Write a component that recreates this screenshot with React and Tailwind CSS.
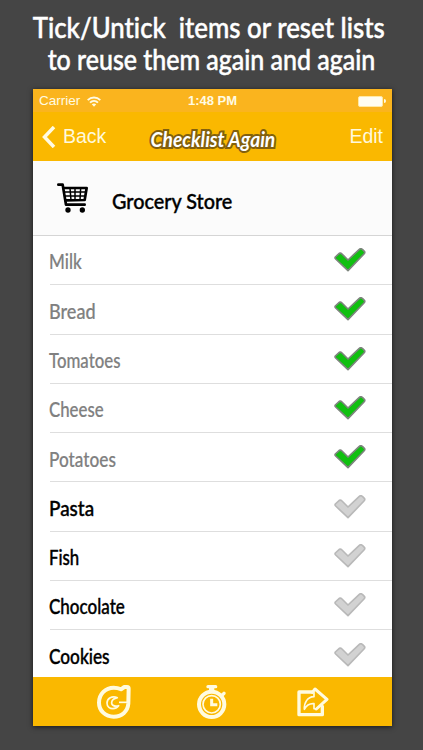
import React from 'react';
import { clsx } from 'clsx';

const ITEMS = [
  { name: 'Milk', done: true, fit: 'scale-x-[0.81]' },
  { name: 'Bread', done: true, fit: 'scale-x-[0.86]' },
  { name: 'Tomatoes', done: true, fit: 'scale-x-[0.8]' },
  { name: 'Cheese', done: true, fit: 'scale-x-[0.8]' },
  { name: 'Potatoes', done: true, fit: 'scale-x-[0.82]' },
  { name: 'Pasta', done: false, fit: 'scale-x-[0.9]' },
  { name: 'Fish', done: false, fit: 'scale-x-[0.8]' },
  { name: 'Chocolate', done: false, fit: 'scale-x-[0.81]' },
  { name: 'Cookies', done: false, fit: 'scale-x-[0.82]' },
];

function Tick({ done }) {
  return (
    <svg width="32" height="24" viewBox="0 0 96 72" strokeLinejoin="round" strokeWidth="5">
      <path
        d="M4 27 16 16Q20 14 24 18L42 36 76 4Q81 0 86 5L91 10Q94 14 90 18L42 68 5 33Q2 30 4 27Z"
        fill={done ? '#10c010' : '#d2d2d2'}
        stroke={done ? '#7d857d' : '#b9b9b9'}
      />
    </svg>
  );
}

function CartIcon() {
  return (
    <svg width="32" height="30" viewBox="0 0 96 90" fill="none" stroke="#000" strokeLinecap="round" strokeLinejoin="round">
      <path d="M4 5h13l10 60h56" strokeWidth="8" />
      <path d="M19 15h70l-6 36-58 1" strokeWidth="8" />
      <path d="M21 27h66M23 39h62M39 15l3 37M54 15v37M71 15l-2 37" strokeWidth="4.5" />
      <circle cx="33" cy="81" r="8" fill="#000" stroke="none" />
      <circle cx="76" cy="81" r="8" fill="#000" stroke="none" />
    </svg>
  );
}

function ResetIcon() {
  return (
    <svg width="34" height="34" viewBox="0 0 102 102" fill="none" stroke="#fffbe0" strokeLinejoin="round">
      <path d="M94 56C92 80 74 95 50 95 25 95 6 77 6 53 6 27 26 8 50 8c9 0 16 2 22 5l10-7h8c3 0 5 2 5 5Z" strokeWidth="12" />
      <path d="M92 52H66" strokeWidth="5" />
      <path d="M61 38c-16-7-31 2-31 16 0 12 9 17 18 17 8 0 13-4 17-9-12 4-22-1-21-10 1-7 8-12 17-14Z" strokeWidth="5" />
    </svg>
  );
}

function TimerIcon() {
  return (
    <svg width="30" height="34" viewBox="0 0 90 102" fill="none" stroke="#fffbe0">
      <circle cx="44" cy="58" r="38" strokeWidth="12" />
      <circle cx="44" cy="58" r="26" strokeWidth="5" />
      <path d="M44 41v18h17" strokeWidth="9" />
      <path d="M33 5h23" strokeWidth="10" strokeLinecap="round" />
      <path d="M44 8v12" strokeWidth="16" />
      <path d="m73 33 8-8" strokeWidth="10" strokeLinecap="round" />
    </svg>
  );
}

function ShareIcon() {
  return (
    <svg width="32" height="30" viewBox="0 0 96 90" fill="none" stroke="#fffbe0" strokeLinejoin="round" strokeLinecap="round">
      <path d="M46 15H6v68h70V58" strokeWidth="10" />
      <path d="M46 16 54 6l36 31-32 29" strokeWidth="9" />
      <path d="M51 17v12c-20 1-30 18-29 38 6-12 15-18 29-17v15l7 1" strokeWidth="5" />
    </svg>
  );
}

export default function App() {
  return (
    <div className="flex h-[750px] w-[423px] flex-col overflow-hidden bg-[#454545] font-[Lato,sans-serif] [font-variant-ligatures:none]">
      <div className="flex h-[89px] shrink-0 flex-col items-center pt-[11px] text-[29px] leading-[32px] font-medium text-white [-webkit-text-stroke:0.5px_white]">
        <p className="mr-[5px] scale-x-[0.89] whitespace-pre">Tick/Untick  items or reset lists</p>
        <p className="scale-x-[0.86] whitespace-nowrap">to reuse them again and again</p>
      </div>

      <div className="ml-[33px] flex h-[637px] w-[359px] shrink-0 flex-col bg-white shadow-[0_1px_5px_rgba(0,0,0,0.65)]">
        {/* Status bar */}
        <div className="flex h-[23px] shrink-0 items-center bg-[#fab41e] pt-px pr-[6px] pl-[6px] font-['Liberation_Sans',sans-serif] text-[13px] text-[#fffbe3]">
          <div className="flex flex-1 items-center gap-[7px]">
            <span className="text-[13.5px]">Carrier</span>
            <svg width="14" height="11" viewBox="0 0 14 11" fill="none" stroke="#fffbe3" strokeWidth="1.9">
              <path d="M.7 4.1C4.3.6 9.7.6 13.3 4.1M3 6.6c2.3-2.2 5.7-2.2 8 0" />
              <path d="M4.8 8.3c1.3-1.1 3.1-1.1 4.4 0L7 10.7Z" fill="#fffbe3" stroke="none" />
            </svg>
          </div>
          <span className="font-bold">1:48 PM</span>
          <div className="flex flex-1 items-center justify-end">
            <span className="h-[11px] w-[25px] rounded-[2px] border border-[#ffe9a4] bg-[#fffdf0]" />
            <span className="ml-px h-1 w-[2px] rounded-r bg-[#fffbe3]" />
          </div>
        </div>

        {/* Navigation */}
        <div className="flex h-[49px] shrink-0 items-center justify-between bg-[#fab800] pt-px pr-[9px] pl-[9px] font-['Liberation_Sans',sans-serif] text-[19.5px] text-[#fff9dc]">
          <div className="flex w-[80px] items-center gap-[7px]">
            <svg width="14" height="22" viewBox="0 0 14 22" fill="none" stroke="#fffbe3" strokeWidth="3.5">
              <path d="M12 1 2.5 11 12 21" />
            </svg>
            <span>Back</span>
          </div>
          <span className="mt-[4px] scale-x-[0.96] font-[Lato,sans-serif] text-[20px] font-bold whitespace-nowrap text-white italic [-webkit-text-stroke:4px_#82600d] [paint-order:stroke_fill]">
            Checklist Again
          </span>
          <span className="w-[80px] text-right">Edit</span>
        </div>

        {/* List title */}
        <div className="flex h-[75px] shrink-0 items-center border-b border-[#d5d5d5] bg-[#fbfbfb] pl-[24px]">
          <CartIcon />
          <span className="mt-[4px] ml-[23px] origin-left scale-x-[0.9] text-[22px] font-medium text-black [-webkit-text-stroke:0.4px_black]">
            Grocery Store
          </span>
        </div>

        {/* Items */}
        <div className="min-h-0 flex-1 overflow-hidden">
          {ITEMS.map((item) => (
            <div key={item.name} className="ml-[17px] flex h-[49.3px] items-center justify-between border-b border-[#dedede] pr-[26px]">
              <span
                className={clsx(
                  '-ml-px mt-[2px] origin-left text-[21px] font-medium',
                  item.fit,
                  item.done ? 'text-[#808080] [-webkit-text-stroke:0.2px_#808080]' : 'text-black [-webkit-text-stroke:0.4px_black]'
                )}
              >
                {item.name}
              </span>
              <Tick done={item.done} />
            </div>
          ))}
        </div>

        {/* Toolbar */}
        <div className="flex h-[49px] shrink-0 items-center bg-[#fab800] pl-[64px]">
          <ResetIcon />
          <div className="mr-[70px] ml-[66px]">
            <TimerIcon />
          </div>
          <ShareIcon />
        </div>
      </div>
    </div>
  );
}
